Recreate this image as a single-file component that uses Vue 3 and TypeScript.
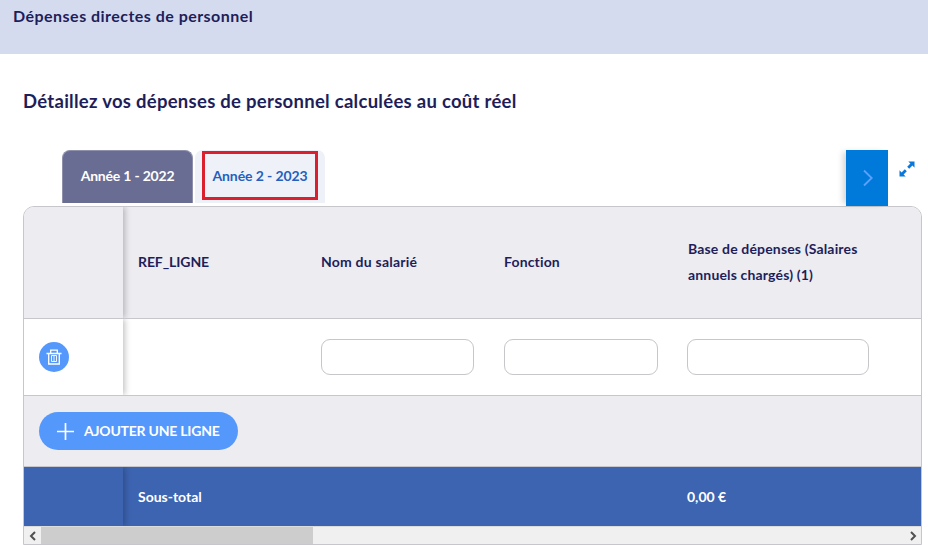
<script setup lang="ts">
interface Column {
  key: string
  label: string
  editable: boolean
  total?: string
}

const tabs: { label: string; active: boolean; marked: boolean }[] = [
  { label: 'Année 1 - 2022', active: true, marked: false },
  { label: 'Année 2 - 2023', active: false, marked: true },
]

const columns: Column[] = [
  { key: 'ref', label: 'REF_LIGNE', editable: false, total: 'Sous-total' },
  { key: 'nom', label: 'Nom du salarié', editable: true },
  { key: 'fonction', label: 'Fonction', editable: true },
  { key: 'base', label: 'Base de dépenses (Salaires annuels chargés) (1)', editable: true, total: '0,00 €' },
]
</script>

<template>
  <main class="page">
    <header class="banner"><span class="banner-text">Dépenses directes de personnel</span></header>
    <h1 class="title"><span class="title-text">Détaillez vos dépenses de personnel calculées au coût réel</span></h1>

    <div class="toolbar">
      <nav class="tabs">
        <button v-for="tab in tabs" :key="tab.label" class="tab" :class="{ active: tab.active }">
          <span class="tab-label" :class="{ marked: tab.marked }">{{ tab.label }}</span>
        </button>
      </nav>
      <button class="next" aria-label="Suivant">
        <svg width="12" height="18" viewBox="0 0 12 18"><path d="M2 1.5 9.7 9 2 16.5" fill="none" stroke="#5ba1ff" stroke-width="1.8" /></svg>
      </button>
      <button class="expand" aria-label="Agrandir">
        <svg width="16" height="16" viewBox="0 0 16 16">
          <path d="M9.3 0.5H15.5V6.7L13.4 4.6 10.2 7.8 8.2 5.8 11.4 2.6ZM0.5 9.3 2.6 11.4 5.8 8.2 7.8 10.2 4.6 13.4 6.7 15.5H0.5Z" fill="#0978d8" />
        </svg>
      </button>
    </div>

    <section class="grid">
      <div class="row head">
        <div class="pin"></div>
        <div v-for="c in columns" :key="c.key" class="cell"><span class="label" :class="c.key">{{ c.label }}</span></div>
      </div>
      <div class="row body">
        <div class="pin">
          <button class="trash" aria-label="Supprimer">
            <svg width="16" height="16" viewBox="0 0 16 16" fill="none" stroke="#fff">
              <path d="M0.5 4.5H15.5M4.7 4V1.2H11.3V4M2.7 4.5V15H13.3V4.5" stroke-width="1.3" />
              <path d="M5.5 6.5H10.5V12.5H5.5ZM8 7V12.5" stroke-width="0.9" />
            </svg>
          </button>
        </div>
        <div v-for="c in columns" :key="c.key" class="cell">
          <input v-if="c.editable" class="field" :class="c.key" type="text" :aria-label="c.label" />
        </div>
      </div>
      <div class="row add">
        <button class="add-button">
          <svg width="17" height="17" viewBox="0 0 17 17"><path d="M8.5 0V17M0 8.5H17" fill="none" stroke="#fff" stroke-width="1.7" /></svg>
          <span class="add-text">AJOUTER UNE LIGNE</span>
        </button>
      </div>
      <div class="row total">
        <div class="pin"></div>
        <div v-for="c in columns" :key="c.key" class="cell"><span class="sum" :class="c.key">{{ c.total }}</span></div>
      </div>
      <div class="scrollbar">
        <span class="arrow"><svg width="8" height="10" viewBox="0 0 8 10"><path d="M6 1 2 5 6 9" fill="none" stroke="#505050" stroke-width="2" /></svg></span>
        <span class="thumb"></span>
        <span class="arrow end"><svg width="8" height="10" viewBox="0 0 8 10"><path d="M2 1 6 5 2 9" fill="none" stroke="#505050" stroke-width="2" /></svg></span>
      </div>
    </section>
  </main>
</template>

<style>
body { margin: 0; background: #fff; overflow: hidden; }
</style>

<style scoped>
.page, .page * { box-sizing: border-box; }
.page {
  width: 928px;
  height: 545px;
  overflow: hidden;
  color: #1e1e5a;
  font: 700 14px/26px Lato, "Liberation Sans", sans-serif;
}
button { border: 0; padding: 0; margin: 0; font: inherit; color: inherit; background: none; }
svg { display: block; flex: none; }
.banner { height: 54px; padding: 3px 0 0 13px; background: #d5dbef; font-size: 16px; white-space: nowrap; }
.banner-text { letter-spacing: 0.47px; }
.title { margin: 0; height: 96px; padding: 34px 0 0 23px; font-size: 18.5px; font-weight: 700; line-height: 26px; white-space: nowrap; }
.title-text { letter-spacing: 0.28px; }
.toolbar { display: flex; height: 56px; padding-left: 62px; }
.tabs { display: flex; flex: 1; gap: 2px; }
.tab {
  width: 131px;
  height: 53px;
  display: flex;
  align-items: center;
  justify-content: center;
  padding-bottom: 2px;
  border-radius: 8px 8px 0 0;
  background: #eef1f8;
  color: #2460bd;
  letter-spacing: -0.1px;
  white-space: nowrap;
}
.tab.active { background: #696d94; border: 1px solid #8f91aa; border-bottom: 0; color: #fff; letter-spacing: -0.2px; }
.tab:not(.active) { width: 130px; }
.marked {
  display: flex;
  align-items: center;
  justify-content: center;
  width: 116px;
  height: 49px;
  border: 3px solid #db1f2e;
}
.next { width: 42px; height: 56px; display: flex; align-items: center; justify-content: center; background: #007ada; box-shadow: -5px 0 6px -2px rgba(0, 0, 0, 0.17); }
.next svg { margin-left: 2px; }
.expand { width: 40px; display: flex; padding: 11px 0 0 11px; }
.grid { width: 899px; height: 339px; margin-left: 23px; border: 1px solid #c6c6cb; border-radius: 11px 11px 0 0; overflow: hidden; }
.row { display: grid; grid-template-columns: 99px 183px 183px 183px 1fr; }
.head { height: 112px; background: #edecf1; border-bottom: 1px solid #c6c6cb; }
.body { height: 77px; background: #fff; border-bottom: 1px solid #c6c6cb; }
.add { height: 71px; display: flex; align-items: center; padding-left: 15px; background: #edecf1; border-bottom: 1px solid #c6c6cb; }
.total { height: 59px; background: #3c64b1; color: #fff; }
.pin { display: flex; align-items: center; padding-left: 15px; box-shadow: 2px 0 6px rgba(0, 0, 0, 0.24); clip-path: inset(0 -12px 0 0); }
.cell { display: flex; align-items: center; padding-left: 15px; }
.label { padding-bottom: 2px; }
.label.ref { letter-spacing: -0.1px; }
.label.nom { letter-spacing: 0.22px; }
.label.fonction { letter-spacing: 0.15px; }
.label.base { width: 190px; padding-left: 1px; letter-spacing: 0.16px; }
.trash { width: 30px; height: 30px; border-radius: 50%; background: #5598fc; display: flex; align-items: center; justify-content: center; }
.field { width: 154px; height: 36px; border: 1px solid #c6c6cb; border-radius: 9px; background: #fff; outline: none; }
.field.nom { width: 153px; }
.field.base { width: 182px; }
.add-button { width: 199px; height: 38px; display: flex; align-items: center; gap: 10px; padding-left: 18px; border-radius: 19px; background: #5598fc; color: #fff; white-space: nowrap; }
.add-text { letter-spacing: -0.22px; }
.scrollbar { display: flex; height: 19px; background: #f0f0f0; border-top: 1px solid #dcdcdc; }
.arrow { width: 17px; display: flex; align-items: center; justify-content: center; }
.thumb { width: 272px; background: #cdcdcd; }
.end { margin-left: auto; }
</style>
